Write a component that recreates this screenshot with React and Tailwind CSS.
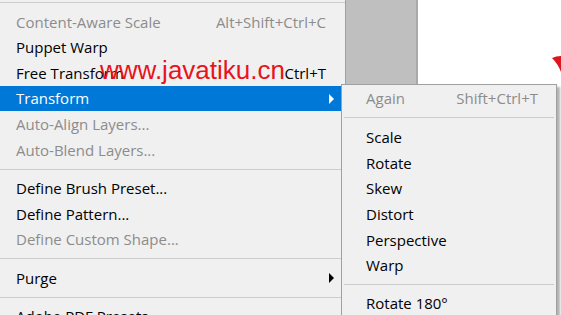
const mainItems = [
  { label: 'Content-Aware Scale', shortcut: 'Alt+Shift+Ctrl+C', disabled: true },
  { label: 'Puppet Warp' },
  { label: 'Free Transform', shortcut: 'Ctrl+T' },
  { label: 'Transform', arrow: true, active: true },
  { label: 'Auto-Align Layers...', disabled: true },
  { label: 'Auto-Blend Layers...', disabled: true },
  { sep: true },
  { label: 'Define Brush Preset...' },
  { label: 'Define Pattern...' },
  { label: 'Define Custom Shape...', disabled: true },
  { sep: true },
  { label: 'Purge', arrow: true },
  { sep: true },
  { label: 'Adobe PDF Presets...' },
];

const subItems = [
  { label: 'Again', shortcut: 'Shift+Ctrl+T', disabled: true },
  { sep: true, tall: true },
  { label: 'Scale' },
  { label: 'Rotate' },
  { label: 'Skew' },
  { label: 'Distort' },
  { label: 'Perspective' },
  { label: 'Warp' },
  { sep: true },
  { label: 'Rotate 180°' },
  { label: 'Rotate 90° Clockwise' },
];

const MenuRow = ({ item }) => {
  const color = item.active ? 'bg-[#0078d7] text-white' : item.disabled ? 'text-[#8c8c8c]' : 'text-black';
  return (
    <div className={`flex h-[25.6px] items-center pl-4 ${color}`}>
      <span className="flex-1 whitespace-nowrap">{item.label}</span>
      {item.shortcut && <span className="whitespace-nowrap">{item.shortcut}</span>}
      <span className="flex w-[19px] items-center">
        {item.arrow && (
          <span
            className={`ml-[3px] h-0 w-0 border-y-[5px] border-l-[5px] border-y-transparent ${
              item.active ? 'border-l-white' : 'border-l-black'
            }`}
          />
        )}
      </span>
    </div>
  );
};

const SubRow = ({ item }) => (
  <div
    className={`flex h-[25.6px] items-center pl-6 pr-[18px] ${item.disabled ? 'text-[#8c8c8c]' : 'text-black'}`}
  >
    <span className="flex-1 whitespace-nowrap">{item.label}</span>
    {item.shortcut && <span className="whitespace-nowrap">{item.shortcut}</span>}
  </div>
);

export default function App() {
  return (
    <div
      className="relative h-[315px] w-[561px] overflow-hidden bg-white text-[15px]"
      style={{ fontFamily: '"Open Sans", "Noto Sans", sans-serif' }}
    >
      <div className="flex h-full">
        {/* main edit menu */}
        <div className="w-[346px] shrink-0 border-r border-[#a0a0a0] bg-[#f0f0f0]">
          <div className="mt-[2px] h-px bg-[#cccccc]" />
          <div className="h-[6px]" />
          {mainItems.map((item, i) =>
            item.sep ? (
              <div key={i} className="flex h-[13px] items-center">
                <div className="h-px w-full bg-[#cccccc]" />
              </div>
            ) : (
              <MenuRow key={i} item={item} />
            )
          )}
        </div>
        {/* gray column */}
        <div className="w-[72px] shrink-0 border-r-2 border-[#a9a9a9] bg-[#bfbfbf]" />
        <div className="flex-1 bg-white" />
      </div>

      {/* red shape on canvas */}
      <svg className="absolute left-[552px] top-[56px]" width="9" height="16" viewBox="0 0 9 16">
        <path d="M0 2 Q4 0 9 0 L9 16 Q6 8 0 2 Z" fill="#e0141b" />
      </svg>

      {/* transform submenu */}
      <div className="absolute left-[341px] top-[84px] h-[240px] w-[216px] border border-[#a0a0a0] bg-[#f0f0f0] shadow-[3px_3px_2px_rgba(0,0,0,0.3)]">
        {subItems.map((item, i) =>
          item.sep ? (
            <div key={i} className={`flex items-center px-[2px] ${item.tall ? 'h-[14px]' : 'h-[12px]'}`}>
              <div className="h-px w-full bg-[#cccccc]" />
            </div>
          ) : (
            <SubRow key={i} item={item} />
          )
        )}
      </div>

      {/* watermark */}
      <div
        className="absolute left-[100px] top-[57px] whitespace-nowrap text-[26px] leading-none text-[#e8141b]"
        style={{ fontFamily: '"Liberation Sans", Arial, sans-serif' }}
      >
        www.javatiku.cn
      </div>
    </div>
  );
}
